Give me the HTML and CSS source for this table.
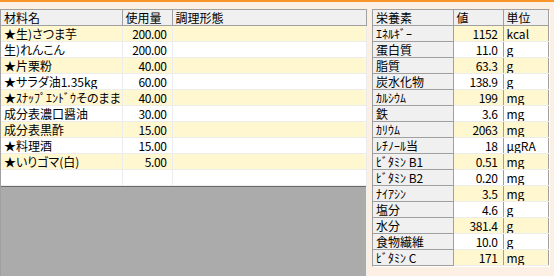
FILE: index.html
```html
<!DOCTYPE html>
<html lang="ja">
<head>
<meta charset="utf-8">
<link rel="stylesheet" href="styles.css">
</head>
<body>
<div class="frame">
  <div class="left">
    <table class="ing">
      <colgroup><col class="c-name"><col class="c-qty"><col class="c-form"></colgroup>
      <thead>
        <tr><th>材料名</th><th>使用量</th><th>調理形態</th></tr>
      </thead>
      <tbody>
        <tr class="odd"><td>★生)さつま芋</td><td class="num">200.00</td><td></td></tr>
        <tr><td>生)れんこん</td><td class="num">200.00</td><td></td></tr>
        <tr class="odd"><td>★片栗粉</td><td class="num">40.00</td><td></td></tr>
        <tr><td>★サラダ油1.35kg</td><td class="num">60.00</td><td></td></tr>
        <tr class="odd"><td>★ｽﾅｯﾌﾟｴﾝﾄﾞｳそのまま</td><td class="num">40.00</td><td></td></tr>
        <tr><td>成分表濃口醤油</td><td class="num">30.00</td><td></td></tr>
        <tr class="odd"><td>成分表黒酢</td><td class="num">15.00</td><td></td></tr>
        <tr><td>★料理酒</td><td class="num">15.00</td><td></td></tr>
        <tr class="odd"><td>★いりゴマ(白)</td><td class="num">5.00</td><td></td></tr>
        <tr><td></td><td></td><td></td></tr>
      </tbody>
    </table>
    <div class="blank"></div>
  </div>
  <div class="right">
    <table class="nut">
      <colgroup><col class="c-nut"><col class="c-val"><col class="c-unit"></colgroup>
      <thead>
        <tr><th>栄養素</th><th>値</th><th>単位</th></tr>
      </thead>
      <tbody>
        <tr class="odd"><th>ｴﾈﾙｷﾞｰ</th><td class="num">1152</td><td>kcal</td></tr>
        <tr><th>蛋白質</th><td class="num">11.0</td><td>g</td></tr>
        <tr class="odd"><th>脂質</th><td class="num">63.3</td><td>g</td></tr>
        <tr><th>炭水化物</th><td class="num">138.9</td><td>g</td></tr>
        <tr class="odd"><th>ｶﾙｼｳﾑ</th><td class="num">199</td><td>mg</td></tr>
        <tr><th>鉄</th><td class="num">3.6</td><td>mg</td></tr>
        <tr class="odd"><th>ｶﾘｳﾑ</th><td class="num">2063</td><td>mg</td></tr>
        <tr><th>ﾚﾁﾉｰﾙ当</th><td class="num">18</td><td>μgRA</td></tr>
        <tr class="odd"><th>ﾋﾞﾀﾐﾝ B1</th><td class="num">0.51</td><td>mg</td></tr>
        <tr><th>ﾋﾞﾀﾐﾝ B2</th><td class="num">0.20</td><td>mg</td></tr>
        <tr class="odd"><th>ﾅｲｱｼﾝ</th><td class="num">3.5</td><td>mg</td></tr>
        <tr><th>塩分</th><td class="num">4.6</td><td>g</td></tr>
        <tr class="odd"><th>水分</th><td class="num">381.4</td><td>g</td></tr>
        <tr><th>食物繊維</th><td class="num">10.0</td><td>g</td></tr>
        <tr class="odd"><th>ﾋﾞﾀﾐﾝ C</th><td class="num">171</td><td>mg</td></tr>
      </tbody>
    </table>
  </div>
</div>
</body>
</html>
```

FILE: styles.css
```css
html, body {
  margin: 0;
  padding: 0;
}
body {
  width: 554px;
  height: 276px;
  overflow: hidden;
  background: #fcefe3;
  font-family: "Noto Sans CJK JP", sans-serif;
  font-size: 12px;
  color: #000;
}
.frame {
  box-sizing: border-box;
  height: 276px;
  border-top: 2px solid #f7942a;
  padding-top: 7px;
  display: flex;
  align-items: flex-start;
}
.left {
  width: 368px;
  height: 267px;
  box-sizing: border-box;
  border-top: 1px solid #a0a0a0;
  border-left: 1px solid #a0a0a0;
  border-right: 2px solid #f4f0ec;
  display: flex;
  flex-direction: column;
  background: #fff;
}
table {
  border-collapse: collapse;
  table-layout: fixed;
}
th, td {
  height: 15px;
  line-height: 15px;
  padding: 0;
  white-space: nowrap;
  overflow: hidden;
  font-weight: normal;
  text-align: left;
  font-feature-settings: "palt";
}
.ing {
  width: 365px;
}
.ing .c-name { width: 121px; }
.ing .c-qty { width: 50px; }
.ing .c-form { width: 194px; }
.ing th {
  background: #f0f0f0;
  border-right: 1px solid #a0a0a0;
  border-bottom: 1px solid #a0a0a0;
  padding-left: 3px;
}
.ing td {
  border-right: 1px solid #ececec;
  border-bottom: 1px solid #ececec;
  padding-left: 3px;
}
.num {
  letter-spacing: -0.4px;
}
.ing td.num {
  text-align: right;
  padding-right: 5px;
  padding-left: 0;
}
.odd td { background: #fff7d0; }
.blank {
  flex: 1;
  background: #ababab;
  border-top: 1px solid #6a6a6a;
}
.right {
  margin-left: 4px;
  border-top: 1px solid #a0a0a0;
  border-left: 1px solid #a0a0a0;
  border-right: 1px solid #fff;
  border-bottom: 1px solid #fff;
}
.nut { width: 175px; background: #fff; }
.nut .c-nut { width: 80px; }
.nut .c-val { width: 50px; }
.nut .c-unit { width: 45px; }
.nut th {
  background: #f0f0f0;
  border-right: 1px solid #a0a0a0;
  border-bottom: 1px solid #a0a0a0;
  padding-left: 3px;
}
.nut td {
  border-bottom: 1px solid #ececec;
  border-right: 1px solid #a0a0a0;
  padding-left: 3px;
}
.nut td.num {
  text-align: right;
  padding-right: 5px;
  padding-left: 0;
}
```
